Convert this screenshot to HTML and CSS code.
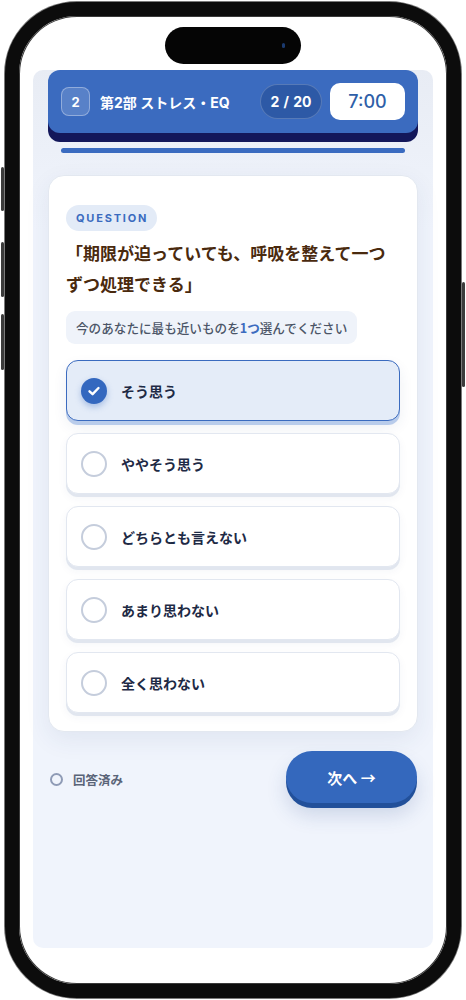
FILE: index.html
```html
<!DOCTYPE html>
<html lang="ja">
<head>
  <meta charset="UTF-8">
  <title>第2部 ストレス・EQ</title>
  <link rel="stylesheet" href="styles.css">
</head>
<body>

  <div class="device">
    <!-- hardware buttons -->
    <span class="side-btn action"></span>
    <span class="side-btn vol-up"></span>
    <span class="side-btn vol-down"></span>
    <span class="side-btn power"></span>

    <div class="phone">
      <div class="screen">
        <div class="island"><span class="lens"></span></div>

        <div class="app">
          <div class="topbar">
            <span class="part-no">2</span>
            <span class="part-title">第2部 ストレス・EQ</span>
            <span class="counter">2 / 20</span>
            <span class="timer">7:00</span>
          </div>

          <div class="progress"></div>

          <div class="card">
            <span class="tag">QUESTION</span>
            <h2 class="question">「期限が迫っていても、呼吸を整えて一つずつ処理できる」</h2>
            <p class="hint">今のあなたに最も近いものを<b>1つ</b>選んでください</p>

            <div class="options">
              <div class="option selected">
                <span class="radio">
                  <svg width="14" height="14" viewBox="0 0 14 14"><path d="M2.5 7.3 L5.6 10.2 L11.5 4" fill="none" stroke="#fff" stroke-width="2.4" stroke-linecap="round" stroke-linejoin="round"/></svg>
                </span>
                <span class="label">そう思う</span>
              </div>
              <div class="option">
                <span class="radio"></span>
                <span class="label">ややそう思う</span>
              </div>
              <div class="option">
                <span class="radio"></span>
                <span class="label">どちらとも言えない</span>
              </div>
              <div class="option">
                <span class="radio"></span>
                <span class="label">あまり思わない</span>
              </div>
              <div class="option">
                <span class="radio"></span>
                <span class="label">全く思わない</span>
              </div>
            </div>
          </div>

          <div class="footer">
            <div class="status">
              <span class="dot"></span>
              <span>回答済み</span>
            </div>
            <button class="next">次へ →</button>
          </div>
        </div>
      </div>
    </div>
  </div>

</body>
</html>
```

FILE: styles.css
```css
body {
  margin: 0;
  background: #ffffff;
  font-family: 'Inter', 'Noto Sans CJK JP', sans-serif;
}

.device {
  position: relative;
  width: 466px;
  height: 1000px;
}

.phone {
  margin: 2px 0 0 5px;
  width: 456px;
  height: 996px;
  box-sizing: border-box;
  border: 14px solid #0c0c0c;
  border-radius: 72px;
  box-shadow: 0 0 0 1px #7a7a7a, inset 0 0 0 1px #3a3a3a;
  background: #ffffff;
  overflow: hidden;
}

.side-btn {
  position: absolute;
  width: 3px;
  background: #3c3c3c;
  border-radius: 2px;
}
.action   { left: 1px; top: 165px; height: 44px; }
.vol-up   { left: 1px; top: 240px; height: 55px; }
.vol-down { left: 1px; top: 312px; height: 56px; }
.power    { right: 1px; top: 280px; height: 105px; }

.screen {
  height: 100%;
  display: flex;
  flex-direction: column;
  align-items: center;
  padding: 11px 14px 36px;
  box-sizing: border-box;
}

.island {
  width: 136px;
  height: 37px;
  background: #050505;
  border-radius: 19px;
  margin-bottom: 6px;
  display: flex;
  justify-content: flex-end;
  align-items: center;
  padding-right: 16px;
  box-sizing: border-box;
  flex-shrink: 0;
}

.lens {
  width: 3px;
  height: 5px;
  border-radius: 2px;
  background: #1b3a6e;
}

.app {
  flex: 1;
  align-self: stretch;
  background: linear-gradient(#e8ecf4, #f0f4fc 160px);
  border-radius: 10px;
  padding: 0 15px;
}

/* Top bar */
.topbar {
  height: 63px;
  display: flex;
  align-items: center;
  padding: 0 13px;
  background: #3b6bbf;
  border-radius: 12px;
  box-shadow: 0 9px 0 #13175a;
  color: #fff;
}

.part-no {
  width: 29px;
  height: 29px;
  box-sizing: border-box;
  display: flex;
  align-items: center;
  justify-content: center;
  border: 1px solid rgba(255,255,255,0.35);
  background: rgba(255,255,255,0.15);
  border-radius: 8px;
  font-size: 13px;
  font-weight: 700;
}

.part-title {
  margin-left: 10px;
  font-size: 14px;
  font-weight: 700;
  flex: 1;
}

.counter {
  width: 62px;
  height: 35px;
  box-sizing: border-box;
  display: flex;
  align-items: center;
  justify-content: center;
  background: #2d59a6;
  border: 1px solid rgba(255,255,255,0.2);
  border-radius: 18px;
  font-size: 14px;
  font-weight: 700;
  word-spacing: 1px;
}

.timer {
  margin-left: 8px;
  width: 75px;
  height: 37px;
  display: flex;
  align-items: center;
  justify-content: center;
  background: #fff;
  color: #2f5fa8;
  border-radius: 10px;
  font-size: 18px;
  font-weight: 500;
}

.progress {
  height: 5px;
  margin: 15px 13px 0;
  background: #3a6bc0;
  border-radius: 3px;
}

/* Card */
.card {
  margin-top: 22px;
  background: #fff;
  border: 1px solid #e3e8f0;
  border-radius: 16px;
  padding: 29px 17px 18px;
  box-shadow: 0 8px 24px rgba(40,60,110,0.08);
}

.tag {
  display: inline-block;
  padding: 0 9px 0 10px;
  height: 26px;
  line-height: 26px;
  background: #e3ebf7;
  color: #3b6bbf;
  border-radius: 13px;
  font-size: 11px;
  font-weight: 700;
  letter-spacing: 1.8px;
}

.question {
  margin: 6px 0 0;
  font-size: 17px;
  line-height: 31px;
  font-weight: 700;
  color: #4a2a0e;
  font-family: 'Noto Sans CJK JP', sans-serif;
}

.hint {
  display: inline-block;
  margin: 12px 0 0;
  height: 33px;
  line-height: 33px;
  padding: 0 10px;
  background: #eff3fa;
  border-radius: 9px;
  font-size: 12.6px;
  font-weight: 500;
  color: #4b5567;
  font-family: 'Noto Sans CJK JP', sans-serif;
}

.hint b {
  color: #3b6bbf;
  font-weight: 700;
}

.options {
  margin-top: 16px;
  display: flex;
  flex-direction: column;
  gap: 12px;
}

.option {
  height: 61px;
  box-sizing: border-box;
  display: flex;
  align-items: center;
  padding-left: 14px;
  gap: 14px;
  background: #fff;
  border: 1px solid #e2e7f0;
  border-radius: 12px;
  box-shadow: 0 3px 0 #e1e6ef, 0 4px 10px rgba(40,60,110,0.05);
}

.option.selected {
  background: #e4ecf8;
  border: 1.5px solid #3b6bbf;
  box-shadow: 0 4px 0 #b9cceb, 0 6px 14px rgba(40,60,110,0.08);
}

.radio {
  width: 26px;
  height: 26px;
  box-sizing: border-box;
  border: 2px solid #c5cddc;
  border-radius: 50%;
  display: flex;
  align-items: center;
  justify-content: center;
}

.selected .radio {
  border: none;
  background: #3468bf;
  box-shadow: 0 3px 6px rgba(52,104,191,0.35);
}

.label {
  font-size: 14px;
  font-weight: 700;
  color: #1e2a45;
  font-family: 'Noto Sans CJK JP', sans-serif;
}

/* Footer */
.footer {
  margin-top: 19px;
  display: flex;
  align-items: center;
  justify-content: space-between;
  padding: 0 1px 0 2px;
}

.status {
  display: flex;
  align-items: center;
  gap: 10px;
  font-size: 12.5px;
  font-weight: 700;
  color: #5a6478;
  font-family: 'Noto Sans CJK JP', sans-serif;
}

.dot {
  width: 13px;
  height: 13px;
  box-sizing: border-box;
  border: 2px solid #8f9bb6;
  border-radius: 50%;
}

.next {
  width: 131px;
  height: 52px;
  margin-bottom: 4px;
  border: none;
  border-radius: 26px;
  background: #3468bd;
  color: #fff;
  font-family: 'Noto Sans CJK JP', sans-serif;
  font-size: 15px;
  font-weight: 700;
  box-shadow: 0 5px 0 #22509a, 0 12px 20px rgba(40,70,140,0.18);
  cursor: pointer;
}
```
